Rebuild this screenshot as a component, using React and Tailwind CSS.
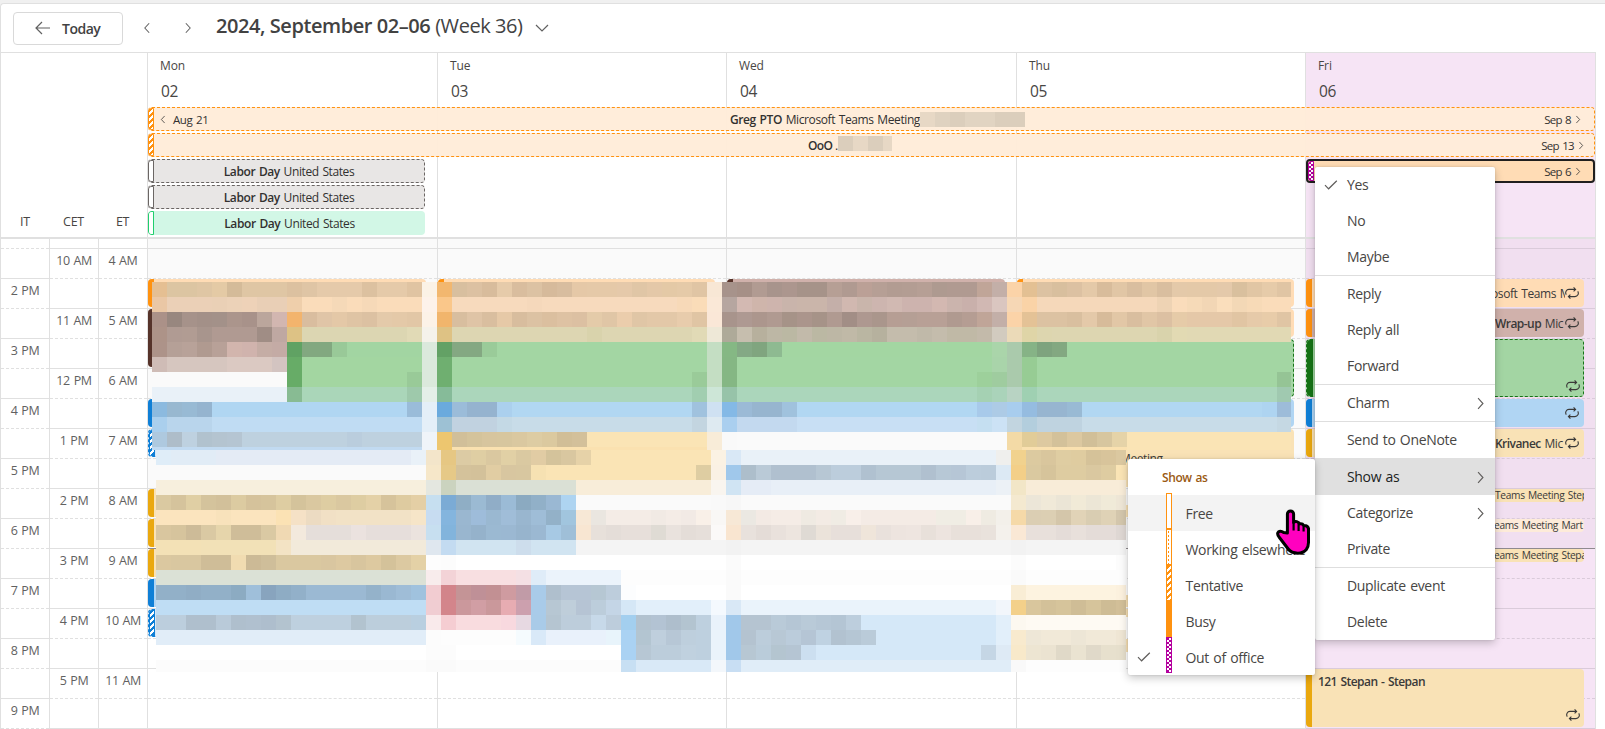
import React from "react";

/* ---------- pixelated regions: one string per 15px row, "colour*cells" ---------- */

const UPPER = [
  "e5bf92 dcc5a2*2 dfc6a4 e4caa5 d4bb99 dfc6a4*3 dcc1a0 dfc5a5 e5caaa*3 dcc1a0 e5caa9*2 e0c4a2 fbf2e6 f2b76f d8bf9f dcc1a2 d8bc9c e6cbaa d9bd9e dcc2a3 d6ba9b d8bd9f e5c8a7 e5c9a8*2 e5c9aa e0c6a6 e4c8a8 e4c9a6 e5caa8 e0c5a4 f8e7d5 a7938b a69087 b19b92 a8948c ac968e a69389*2 b69f95 b09a91 bba096 b69f95 b29c92 b39d93 b69f95 ae9a90 b09a91*2 c0a598 c3afa8 fbd3a8 e3c093 dcc2a2 d8bf9e dcc1a2 e4c9a8 d8bc9b e1c6a5 d9be9f e1c6a5 d9be9f e4c9a9 e4c9a8*2 e4c9aa d9c09e e1c6a4 e6cba9 e0c5a4",
  "eac7a5 ebd0b7*3 ead0b6 ecd2b8 eed2b8 e9cfb6*2 efcfab fadcba*2 f5d9b8 fadcba f6d9b8 fadcba*3 fdf2ea fac78a f7dabd*5 f5d8bb f7dabd*9 f7d9b8 fadcb8 fae8d7 b6a6a0 d3b9b2 cfb5ab ceb4ad c9b4ab cab5aa*2 c4afa9 d1b8b0 c9b5ab cdb5af d1b9b2 cdb3ae*2 d3b8b1 cbb4ad c9b0ab d1b8b3 dac6c0 f6d7b5 fad3a7 f5d8ba*8 eed3b4 fadcbb f6dab8 f2d6b5 fadebc f3d8b6 f7dab7 fadcba*2",
  "ab9188 98877f a6928a a39088 a39189 ab958c a8928a bba69c d2b6b0 f3b46d d9bd9f e0c5a7 e4c8a7 dfc4a4 dcc1a2 e4caaa e4c9a8 e2c7a6 fcf2e7 f1b56c d8be9f dfc4a6 d9be9f e6c9a7 d8bd9e dcc2a3 dbbf9f dec2a3 dcc0a2 e4cba9 e0c6a6 ebcdac e0c6a6 e3c8a8*2 e8ccac e0c5a4 fae7d7 a8948c ae9992 ac968d b09a91 a69388 ab958c a69388 b09a91 a28e86 ae9890 aa968c b69e94 b59f95 b8a096*2 b09a90 b59d93 c0a598 c3afa8 fbd3a8 e4c296 dcc2a2*2 d9bf9f e4c9a9 d7bb9a e2c7a6 d9be9f e1c6a6 dcc0a2 e6cba8 e5c8a8*3 e1c5a3 e6caa9 e8cca9 e0c5a4",
  "ad9388 b09b93 b19c93 a8958d b09a92*3 a08d85 bfa8a2 ddc285 dcd6b2*7 e1dab6 f5f2ea dec284 ddd6b2*9 d9d3ac ddd6b2*6 e1dab6 eee8d7 aeaa99 c6beae b7b09d bdb7a5 bbb8a3 c2baaa bbb8a3 bdb7a5 c0b9a7 bab6a2 b6b19e c4bcac*2 c0b9a9 c4bcac c0b9a6*2 c3baaa d2cbbf ebdab8 dfd5a7 ddd6af ddd6b1*7 d9d3ac e2dab3 e1d9b4*7",
  "ad9389 b5a097 b8a299 b09a90 b8a198 d2b5ad d0b3ad c5ada5 c4aba5 60a263 82a880*2 99c998 a2d5a2*5 dbe9dc 63a165 84a882*2 9acb99 a3d6a3*14 c4dec3 85b884 84a985 80a57f 8eba91 a3d6a2*14 aad5aa aacaac 86b386 7ea37e 83a881 a3d6a3*15",
  "cfbcb6 d6c6bf*4 dbc9c2*3 d3c4c1 67ac67 a3d6a1*8 dbe9dc 6faf70 a3d6a3*17 c4dec3 85b784 a3d6a3*17 a9d4aa aacaac 97cc94 a3d6a3*17",
  "fafafa*9 67ac67 a3d6a1*7 99ca98 dbe9dc 6faf70 a3d6a3*16 9acb99 c4dec3 85b784 a3d6a3*16 9dd09b 9fcc9f aacaac 97cc94 a3d6a3*16 95c495",
  "e9f1f8*9 88bb93 aad6b9*7 9ec9ab e4efe8 86bb99 abd6bb*16 a1ceb0 cde6d7 97c3a9 abd6bb*16 a5d1b3 aad3ba b8d3c3 9fd0b2 abd6bb*16 a0c9b0",
  "8cbadf 98b8d0 98bad4 95b4cf b0d6f2*13 9abcd9 e4eff8 6aaadd 9bbcd9 95b3cf*2 abd0ee b1d7f2*12 a0c2de cfe1f2 84b9e6 9bbad6 97b5cf*2 a0c2dd b1d7f2*12 a8caea adcbe6 a8cdee 95bce0 97b5d0*2 99bad4 b1d7f2*12 aed4f1 9dbcd9",
  "aacfed b9d5ec*3 c0dcf3*14 e4eff8 9dc1d4 c1d2e0*3 c4d9e5 c8dce8*12 c3d5e0 deeaf1 aacfef c3d9ef*4 c8dff4*12 c5dff1 cce2f5 c2d5e0 b3cedd bfd3e0*3 c8dce8*13 c5d8e3",
  "aec9df aebdc9 bed1e0 b1c2ce b4c4d0 b5c5d2 bed1df*7 bacddd bed1df*4 eff4f9 edc66f d1bf99 d4c39b d7c59e d7c69e dac8a0 ddcca3 dbc99f d1be97 d3c09a fae4b5*8 f8ecd8 f9f9f9 fafafa*18 f3daa6 e1cc98 ddc9a0 d3c19a dcc8a0 d1bf98 d7c69f e5d3a8 fae4b5*11",
  "c1daf1*18 eff4f9 edc66f fae1b0*17 f8ecd8 f9f9f9 fafafa*18 f3daa6 fae1b0*7 fae4b5*11",
];

const LOWER = [
  "dfedf8 e1ecf6*3 e4ebf5*13 e9f1f8 f3e5ca e6c783 dccba4 dfcea3 dac8a0 e1d0a5 dac9a1 e1cca4 d4c39b d9c7a0 e6d2a8 fae4b5*8 fbf2e3 d9e8f6 e9f1f8*17 efefed f1d28e dccaa0 d9c69d dfcda2 dfcca0 d5c299 d8c49b dbc8a0",
  "fafafa*18 f6e7c9 e6c987 d4c29b d3c19a e1cda3 d8c6a0 d8c7a0 f6e1b2 fae4b5*10 decda2 faf1e4 a0c8eb adbecb bacad7 b0c0cf*3 b7c7d4 bccddc*2 b0c1d0 b6c7d4*3 b0c0cf b7c8d6 b6c6d6 bccddc bbccdb dce9f4 f3cf88 dac9a0 d6c49b decca1*2 dac8a0 decca1 fae4b5",
  "f7efdd*18 e4e7e0 cbd3bf dae0d5*8 f8edd9*9 f9f5ef d0e4f3 e5ecf6*2 e8eff7*15 ecf1f6 f2e6c7 f8ecd8*7",
  "dac9a1 d5c39c e0cfa4 d4c39c d2c09a dccba1 d5c29b d6c49c decda2 d4c39b dac8a0 decda2 dac8a0 decda2 e4d1a7 d6c39b decba0 e4cfa5 c6dff0 7babd5 8faec5 9bbad3 90adc7 9bbbd6 8baac1 91b0c8 9ab8d3 aed4f1 fafafa*9 f9f9f9 f7f7f7 fafafa*18 f4e9d0 ece6d8 f0e9d8 ebe5d6 f1ead7 ece6d6 f0ead8 eee6d6",
  "fbe4be*4 f8e2bb fbe4be*3 fbe2b4 f5e1c6 ecdbc2 f1e0c5 f2e2c6*5 f6e5c8 c7dcf1 84b5de 9ab7d0 9ebcda 9ab8d1 a0bdd8 99b6cf 9fbdd7 93b1c8 a1c5de f7e8d6 eae6e0 f4ece6*3 f1eae4 f4ece6 f2eae5 f9f0e8 f9f7f5 f7e8d6 ebe8e2 f3eae4 f5ece6*2 efeae2 f3ebe4 f0ece4 f8efe9 f4ebe5*5 f0ede4*2 f8efe8 efebe2 f3f0ea f5d9a8 dbceb3 dccfb3 d4c6aa e1d3b7 d9cdb2 dfd2b6 d3c6ac",
  "d9c69f d6c49d cdbb98 dac9a3 e6d5ab cfbd99*2 dac9a3 f0d9b3 f3e9dd e5deda*3 ebe2df e6dedb*3 ebe3de c7dff0 82b4dc 99b6cf 95b2cb 9bb9d2 9bb8d2 97b4cd 9bb8d2 a7c9e4 9fbfd8 f8e6d2 e7e0da e4ddd8 e7dfda*2 dfdbd4 e9e2dd e4ddd8 e6dfda fbf9f8 f9e5d0 e8e1dc e4dcd7 e9e1dc ede5df dfdad4 ebe3da e7dfda*2 efe5da e9e1dc ede4df eee5e0 e8e0da ede4df e8e0da*2 e9e2dc f4f1ec fae8d5 e8e0db*2 e4dcd8 e8e0db e4dcd8*2 ded7d3",
  "f3e1b6*3 f2e1b7*5 f3e3c4 f2eada*9 dfe7ef c3dbf1 d1e4f1*4 cdddec d1e4f1*3 f4f4f4*9 f4f4f4 f2f2f2 f4f4f4*18 f2f2f2 f4f4f4*7",
  "dbc8a0 d9c7a0*2 cfbd98*2 f1dcb1 ccba96 cfbe9a dac8a0*3 d9c6a0 ddc9a1 d8c59e ddc9a0 d4c29a dcc9a1 e4d1a6 fdfdfd fcfcfc ffffff*17 ffffff fbfbfb ffffff*18 fcfcfc ffffff*6 fcfcfc",
  "dbe1d6*18 f8ecec f3d3d7 f8dfe1*4 f4e0e4 dfecf8 ebf3fb*5 fdfdfd*7 fafafa fdfdfd*18 fafafa fdfdfd*7",
  "92b0c8*2 90adc5 92b0c8*2 8cabc2 9fbfda 88a4be 8eacc4 92b0c9 9bb9d3*4 94b2ca 9ab8d2 9fbdd7 a0c2de f2ccd1 d2848a c49496 bf9097 c29093 cf9ba0 c19ba7 a9cbe9 afbfcd b6c5d5*2 b6c7d3 bdcddc fcfdfe ffffff*6 fafafa ffffff*18 f9edd5 fdf3e0*6 fcf1de",
  "bfddf4*18 f0cdd2 d3858b cb989c d19ea4 ca989b e7acb2 cca0ae a9cbe9 b7c7d3 bfceda b6c4d4 bccddb c4d5e6 d5e7f6 e2effa*5 f4f9fe d9e8f6 eaf3fb*17 f2f6fb f3d08a d9c69d d3c199 d6c49b cfbd96 d6c49b cebc95 d2bf98",
  "bccedd*2 afbfcd*2 b9cad9 afbfcd b0c0cf aebecd b3c3cf bed0df*4 b2c3cf bccedc*3 b9cfe0 f9eaeb f5cdd2 f9dcdf*3 f8d9df e7d9e2 a9cbe8 b5c5d1 bdcddb*2 c7d9e9 bdcddc a3cfef b2c2cf b3c3d3 aebecc b3c4d0 bed0df e9f2fb a1c8ea b5c4d1*2 b9cad8 b5c6d5 b9cad8 b6c7d6 b4c5d4 bdcedd d5e8f8*9 e2effa fcf8f0 fefaf3*7",
  "e1edf8*18 fcfcfc fdfdfd*5 f5fbfe d9e9f8 e9f1fb*4 e8f4fb aad2f3 b3c5d1 bfcfdd b7c7d6 becfdd bed0df eaf3fb a1c8ea b4c3d0 bccddb b8c8d5 bbccdb b5c5d5 bfd2e2 b2c2d0 b5c6d4 bacbd9 d5e8f8*8 e2effa f8eace eee7d7 f1e9d8*2 ede6d6 f1e9d8*2 efe6d4",
  "ffffff*18 fcfcfc fcfcfc ffffff*11 aad2f3 b7c7d4 bccddb*2 c0d1df bed0df eaf3fb a1c8ea b7c7d3 baccda b4c5d0 b5c5d3 ccdff0 d5e8f8*11 c5d6e5 deeaf5 f8e9ca ede5d2 ebe3d1 e0d9c8 eae3d1 e0d9c9 e7e0cd e6dfcc",
  "fcfcfc*18 fafafa fafafa fcfcfc*11 c7dff3 d9e9f7*5 f3f7fb c8def3 e0edf8*18 f9f9f9 fdfdfd*7",
];

const parseRow = (row) =>
  row.split(" ").map((run) => {
    const [color, n] = run.split("*");
    return { color: "#" + color, cells: Number(n || 1) };
  });

function Mosaic({ rows, className }) {
  return (
    <div className={"overflow-hidden " + className}>
      {rows.map((row, i) => (
        <div key={i} className="flex h-[15px]">
          {parseRow(row).map((run, j) => (
            <div
              key={j}
              className="h-full shrink-0"
              style={{ width: run.cells * 15, backgroundColor: run.color }}
            />
          ))}
        </div>
      ))}
    </div>
  );
}

/* ---------- icons ---------- */

function Chevron({ dir, className }) {
  const d = {
    left: "M8.5 1.5 2.5 8l6 6.5",
    right: "M2.5 1.5l6 6.5-6 6.5",
  }[dir];
  return (
    <svg viewBox="0 0 11 16" className={className} fill="none" stroke="currentColor" strokeWidth="1.4">
      <path d={d} />
    </svg>
  );
}

function Check() {
  return (
    <svg viewBox="0 0 14 10" className="h-[10px] w-[14px]" fill="none" stroke="#605e5c" strokeWidth="1.2">
      <path d="M1 5.2 4.6 8.8 12.8.8" />
    </svg>
  );
}

function Repeat() {
  return (
    <svg viewBox="0 0 14 12" className="h-3 w-3.5 shrink-0" fill="none" stroke="#3b3a39" strokeWidth="1.1">
      <path d="M8.6.4l2 2-2 2M10.4 2.4H4a3.3 3.3 0 0 0-2.7 5.2M5.4 7.6l-2 2 2 2M3.6 9.6H10a3.3 3.3 0 0 0 2.7-5.2" />
    </svg>
  );
}

function HandCursor() {
  return (
    <svg viewBox="0 0 34 46" className="absolute left-[1276px] top-[509px] z-30 h-[46px] w-[34px]">
      <path
        d="M11.4 24V5a3.1 3.1 0 0 1 6.2 0v8.4q1.2-1.2 3.2-.8 2.2.5 2.8 2.3 2.8-.6 4.2 1.6 3.8-.2 4.7 3v14q0 4-2.2 7-3 3.7-8.5 3.7-6.500 0-9.600-4.200L3.400 28.500Q.5 25 2.400 23q2.200-1.800 5.300.5z"
        fill="#ff00bf"
        stroke="#000"
        strokeWidth="3"
        strokeLinejoin="round"
      />
      <path d="M17.6 13v8.5M22.6 14v8M27.6 16v6.5" stroke="#000" strokeWidth="2.2" fill="none" />
    </svg>
  );
}

/* ---------- status stripes ---------- */

const STRIPE = {
  orange: "bg-[#ff9210]",
  brown: "bg-[#56332a]",
  green: "bg-[#167316]",
  blue: "bg-[#0f7fd6]",
  gold: "bg-[#eaa80f]",
  orangeHatch:
    "border border-[#ff9210] bg-[repeating-linear-gradient(135deg,#ff9210_0_2.2px,#fff_2.2px_4.3px)]",
  blueHatch:
    "border border-[#0f7fd6] bg-[repeating-linear-gradient(135deg,#0f7fd6_0_2.2px,#fff_2.2px_4.3px)]",
  grayFree: "border border-[#6b6664] bg-white",
  greenFree: "border border-[#1fce6d] bg-white",
  away: "border border-[#b4009e] bg-[#b4009e] bg-[conic-gradient(#fff_25%,transparent_0_50%,#fff_0_75%,transparent_0)] bg-[size:4px_4px]",
};

const BODY = {
  orange: "bg-[#ffdcb5]",
  brown: "bg-[#d0b1ab]",
  greenDashed: "bg-[#a3d5a3] border border-dashed border-[#167316]",
  blue: "bg-[#b0d5f3]",
  lightBlue: "bg-[#d5e8f8] border border-dashed border-[#0f7fd6]",
  gold: "bg-[#f9e2b6]",
  cream: "bg-[#fdebd9]",
};

function Event({ row, span = 1, stripe, body, children, className = "mr-[11px]" }) {
  return (
    <div
      className={"mb-0.5 flex min-w-0 overflow-hidden rounded-[4px] " + BODY[body] + " " + className}
      style={{ gridColumn: 1, gridRow: `${row} / span ${span}` }}
    >
      <div className={"w-1.5 shrink-0 " + STRIPE[stripe]} />
      {children}
    </div>
  );
}

/* ---------- calendar body ---------- */

const ROWS = Array.from({ length: 16 }, (_, i) => i);

function TimeColumn({ labels, solidFirst }) {
  const line = (solid) =>
    solid ? "border-b border-solid border-[#e0e0e0]" : "border-b border-dashed border-[#e0e0e0]";
  return (
    <div className="w-[49px] shrink-0 border-r border-[#e0e0e0]">
      <div className={"h-[10px] " + line(solidFirst)} />
      {ROWS.map((i) => {
        const labelled = i % 2 === (solidFirst ? 0 : 1);
        return (
          <div
            key={i}
            className={
              "flex h-[30px] items-start justify-center whitespace-nowrap pt-[3px] text-[12.5px] leading-[17px] tracking-[-0.4px] text-[#616161] [word-spacing:1px] " +
              line(!labelled)
            }
          >
            {labelled ? labels[Math.floor(i / 2)] : ""}
          </div>
        );
      })}
    </div>
  );
}

function DayColumn({ width, friday, children }) {
  return (
    <div className={"relative shrink-0 border-l border-[#e0e0e0] " + width}>
      <div className={"h-[10px] border-b " + (friday ? "border-[#dacbda] bg-[#f1dff0]" : "border-[#e0e0e0] bg-[#fafafa]")} />
      {ROWS.map((i) => {
        const bg = i < 10 ? (friday ? "bg-[#f1dff0]" : "bg-[#fafafa]") : friday ? "bg-[#f6e4f5]" : "bg-white";
        const color = i === 9 ? "border-[#8f8a8f]" : friday ? "border-[#dacbda]" : "border-[#e0e0e0]";
        return <div key={i} className={`h-[30px] border-b ${bg} ${color} ${i % 2 ? "border-solid" : "border-dashed"}`} />;
      })}
      <div className="absolute inset-x-0 top-[10px] grid auto-rows-[30px] grid-cols-1">{children}</div>
    </div>
  );
}

const EventText = ({ bold, children, small, className = "" }) => (
  <div
    className={
      "min-w-0 flex-1 overflow-hidden whitespace-pre text-[#3b3a39] [word-spacing:1px] " +
      (small ? "text-[10.2px] leading-[12px] tracking-[-0.32px] " : "text-[12px] leading-[17px] tracking-[-0.4px] ") +
      className
    }
  >
    {bold && <span className="font-semibold tracking-[-0.55px]">{bold}</span>}
    {children}
  </div>
);

const Recurring = ({ className = "items-center pr-[5px]" }) => (
  <div className={"flex shrink-0 " + className}>
    <Repeat />
  </div>
);

function FridayEvents() {
  return (
    <>
      <Event row={2} stripe="orange" body="orange">
        <EventText className="pl-[179px] pt-[6px]">osoft Teams M</EventText>
        <Recurring />
      </Event>
      <Event row={3} stripe="orange" body="brown">
        <EventText bold="Wrap-up" className="pl-[183px] pt-[6px]">{" "}Mic</EventText>
        <Recurring />
      </Event>
      <Event row={4} span={2} stripe="green" body="greenDashed">
        <div className="flex-1" />
        <Recurring className="items-end pb-[4px] pr-[3px]" />
      </Event>
      <Event row={6} stripe="blue" body="blue">
        <div className="flex-1" />
        <Recurring />
      </Event>
      <Event row={7} stripe="gold" body="gold">
        <EventText bold="Krivanec" className="pl-[183px] pt-[6px]">{" "}Mic</EventText>
        <Recurring />
      </Event>
      <Event row={9} stripe="gold" body="gold" className="mr-[11px] h-[13px]">
        <EventText small className="pl-[183px]">Teams Meeting Step</EventText>
      </Event>
      <Event row={10} stripe="orange" body="cream" className="mr-[11px] h-[13px]">
        <EventText small className="pl-[182px]">eams Meeting Mart</EventText>
      </Event>
      <Event row={11} stripe="gold" body="gold" className="mr-[11px] h-[13px]">
        <EventText small className="pl-[182px]">eams Meeting Stepa</EventText>
      </Event>
      <Event row={15} span={2} stripe="gold" body="gold">
        <EventText bold="121 Stepan - Stepan" className="pl-[6px] pt-[4px]" />
        <Recurring className="items-end pb-[6px] pr-[4px]" />
      </Event>
    </>
  );
}

function AllDay({ stripe, body, className = "leading-[23px]", children }) {
  return (
    <div
      className={
        "flex h-6 overflow-hidden rounded-[4px] text-[12px] tracking-[-0.4px] text-[#323130] [word-spacing:1px] " +
        body +
        " " +
        className
      }
    >
      <div className={"w-1.5 shrink-0 rounded-l-[3px] " + stripe} />
      {children}
    </div>
  );
}

function Swatches({ colors }) {
  return (
    <div className="flex h-[15px] w-full overflow-hidden">
      {colors.map((c, i) => (
        <div key={i} className="h-full w-[15px] shrink-0" style={{ backgroundColor: c }} />
      ))}
    </div>
  );
}

/* ---------- menus ---------- */

function MenuItem({ label, checked, submenu, active }) {
  return (
    <div
      className={
        "flex items-center text-[14px] tracking-[-0.32px] [word-spacing:1px] " +
        (active ? "h-[37px] bg-[#e0e0e0] pt-px text-[#201f1e]" : "h-[36px] text-[#484644]")
      }
    >
      <div className="flex w-8 shrink-0 justify-end pr-[9px]">{checked && <Check />}</div>
      <div className="flex-1 whitespace-nowrap pb-px">{label}</div>
      {submenu && <Chevron dir="right" className="mr-[10px] h-[13px] w-[9px] text-[#605e5c]" />}
    </div>
  );
}

const Divider = () => <div className="h-px bg-[#dedede]" />;

function StatusItem({ label, swatch, checked, hover }) {
  return (
    <div
      className={
        "flex h-9 items-center text-[14px] tracking-[-0.32px] text-[#484644] [word-spacing:1px] " +
        (hover ? "bg-[#f3f3f3]" : "")
      }
    >
      <div className="flex w-[38px] shrink-0 pl-[9px]">{checked && <Check />}</div>
      <div className={"-mt-1 h-9 w-1.5 shrink-0 " + swatch} />
      <div className="ml-[13.5px] whitespace-nowrap">{label}</div>
    </div>
  );
}

const DAYS = [
  ["Mon", "02", "w-[290px]"],
  ["Tue", "03", "w-[289px]"],
  ["Wed", "04", "w-[290px]"],
  ["Thu", "05", "w-[289px]"],
  ["Fri", "06", "w-[290px]"],
];

export default function App() {
  return (
    <div className="relative h-[729px] w-[1605px] overflow-hidden bg-[#f0f0f0] pt-[3px] font-['Open_Sans','Noto_Sans',sans-serif]">
      <div className="flex h-[726px] flex-col rounded-tl-[4px] border-l border-t border-[#e0e0e0] bg-white">
        {/* toolbar */}
        <div className="flex h-12 shrink-0 items-center pl-3 text-[#424242]">
          <div className="flex h-[33px] w-[110px] items-center rounded-[4px] border border-[#d9d9d9] pl-[21px]">
            <svg viewBox="0 0 16 14" className="h-[14px] w-4" fill="none" stroke="#616161" strokeWidth="1.2">
              <path d="M7 1 1 7l6 6M1 7h14" />
            </svg>
            <span className="ml-[11px] text-[14px] font-semibold tracking-[-0.5px]">Today</span>
          </div>
          <Chevron dir="left" className="ml-5 h-3 w-2 text-[#616161]" />
          <Chevron dir="right" className="ml-[33px] h-3 w-2 text-[#616161]" />
          <div className="ml-[24px] w-[308px] whitespace-pre pb-[5px] text-[20px] leading-[27px] tracking-[-0.43px]">
            <span className="font-semibold">2024, September 02–06</span> (Week 36)
          </div>
          <svg viewBox="0 0 14 8" className="ml-[11px] h-2 w-3.5" fill="none" stroke="#616161" strokeWidth="1.2">
            <path d="M1 1l6 6 6-6" />
          </svg>
        </div>

        {/* day headers and all-day events */}
        <div className="relative flex h-[187px] w-[1595px] shrink-0 border-b-2 border-t border-[#e0e0e0]">
          <div className="flex w-[146px] shrink-0 items-end pb-[7px] text-center text-[12.5px] leading-[17px] text-[#484644]">
            <div className="w-12 tracking-[-0.3px]">IT</div>
            <div className="w-[49px] tracking-[-0.3px]">CET</div>
            <div className="w-[49px] tracking-[-0.3px]">ET</div>
          </div>
          {DAYS.map(([name, num, width]) => (
            <div
              key={name}
              className={
                "shrink-0 border-l border-[#e0e0e0] pl-3 pt-1 text-[#484644] " +
                width +
                (name === "Fri" ? " bg-[#f6e4f5]" : "")
              }
            >
              <div className="text-[12px] leading-[17px] tracking-[-0.1px]">{name}</div>
              <div className="mt-[7px] pl-px text-[15.5px] leading-5 tracking-[-0.4px]">{num}</div>
            </div>
          ))}
          <div className="w-px bg-[#e0e0e0]" />
          <div className="absolute left-[147px] top-[54px] grid w-[1447px] gap-0.5">
            <AllDay stripe={STRIPE.orangeHatch} body="border border-l-0 border-dashed border-[#ff9210] bg-[#ffecd8]/95">
              <div className="relative flex flex-1 items-center">
                <Chevron dir="left" className="ml-[6px] h-[9px] w-[6px]" />
                <span className="ml-[7px] text-[11.5px]">Aug 21</span>
                <div className="ml-auto flex items-center">
                  <span className="text-[11.5px] tracking-[-0.7px]">Sep 8</span>
                  <Chevron dir="right" className="ml-[4px] mr-[13px] h-[9px] w-[6px]" />
                </div>
                <div className="absolute left-[576px] flex items-center whitespace-pre">
                  <div className="w-[190px]">
                    <span className="font-semibold">Greg PTO</span> Microsoft Teams Meeting
                  </div>
                  <div className="w-[105px]">
                    <Swatches colors={["#e7d8c5", "#dfd2c0", "#dbcebc", "#e1d4c2", "#e1d4c2", "#dbcebc", "#dbcebc"]} />
                  </div>
                </div>
              </div>
            </AllDay>
            <AllDay stripe={STRIPE.orangeHatch} body="border border-l-0 border-dashed border-[#ff9210] bg-[#ffecd8]/95">
              <div className="relative flex flex-1 items-center justify-end">
                <span className="text-[11.5px] tracking-[-0.7px]">Sep 13</span>
                <Chevron dir="right" className="ml-[4px] mr-[10px] h-[9px] w-[6px]" />
                <div className="absolute left-[654px] flex items-center whitespace-pre">
                  <div className="w-[30px] tracking-[-0.6px] [word-spacing:0px]">
                    <span className="font-semibold">OoO</span> .
                  </div>
                  <div className="-mt-1 w-[54px]">
                    <Swatches colors={["#dbcebc", "#e7d8c5", "#dbcebc", "#e7d8c5"]} />
                  </div>
                </div>
              </div>
            </AllDay>
            <div className="flex justify-between">
              <div className="grid w-[277px] gap-0.5">
                {[0, 1].map((i) => (
                  <AllDay key={i} stripe={STRIPE.grayFree} body="border border-l-0 border-dashed border-[#6b6664] bg-[#e8e6e5]">
                    <div className="flex-1 text-center">
                      <span className="font-semibold">Labor Day</span> United States
                    </div>
                  </AllDay>
                ))}
                <AllDay stripe={STRIPE.greenFree} body="bg-[#d2f7e6]" className="leading-[25px]">
                  <div className="flex-1 text-center">
                    <span className="font-semibold">Labor Day</span> United States
                  </div>
                </AllDay>
              </div>
              <AllDay stripe={STRIPE.away} body="border-2 border-[#201f1e] bg-[#ffdcb5]" className="w-[289px] leading-[20px]">
                <div className="flex flex-1 items-center justify-end">
                  <span className="pt-px text-[11.5px] tracking-[-0.7px]">Sep 6</span>
                  <Chevron dir="right" className="ml-[4px] mr-[12px] h-[9px] w-[6px]" />
                </div>
              </AllDay>
            </div>
          </div>
        </div>

        {/* time grid */}
        <div className="relative flex h-[490px] w-[1595px] shrink-0">
          <TimeColumn labels={["2 PM", "3 PM", "4 PM", "5 PM", "6 PM", "7 PM", "8 PM", "9 PM"]} />
          <TimeColumn solidFirst labels={["10 AM", "11 AM", "12 PM", "1 PM", "2 PM", "3 PM", "4 PM", "5 PM"]} />
          <div className="w-[48px] shrink-0 overflow-hidden">
            <TimeColumn solidFirst labels={["4 AM", "5 AM", "6 AM", "7 AM", "8 AM", "9 AM", "10 AM", "11 AM"]} />
          </div>
          <DayColumn width="w-[290px]">
            <Event row={2} stripe="orange" body="orange" />
            <Event row={3} span={2} stripe="brown" body="brown" className="mr-[150px]" />
            <Event row={6} stripe="blue" body="blue" />
            <Event row={7} stripe="blueHatch" body="lightBlue" />
            <Event row={9} stripe="gold" body="gold" />
            <Event row={10} stripe="gold" body="gold" />
            <Event row={11} stripe="gold" body="gold" />
            <Event row={12} stripe="blue" body="blue" />
            <Event row={13} stripe="blueHatch" body="lightBlue" />
          </DayColumn>
          <DayColumn width="w-[289px]">
            <Event row={2} stripe="orange" body="orange" />
          </DayColumn>
          <DayColumn width="w-[290px]">
            <Event row={2} stripe="brown" body="brown" />
          </DayColumn>
          <DayColumn width="w-[289px]">
            <Event row={2} stripe="orange" body="orange" />
            <Event row={3} stripe="orange" body="orange" />
            <Event row={4} span={2} stripe="green" body="greenDashed" />
            <Event row={6} stripe="blue" body="blue" />
            <Event row={7} span={2} stripe="gold" body="gold">
              <EventText className="pl-[97px] pt-[21px]">Meeting</EventText>
            </Event>
            <Event row={9} stripe="gold" body="gold" className="mr-[11px] mt-[16px]" />
            <Event row={12} stripe="gold" body="gold" className="mr-[11px] mt-[16px]" />
            <Event row={13} stripe="gold" body="gold" className="mr-[11px] h-2" />
            <Event row={14} stripe="gold" body="gold" className="mr-[11px] h-[13px]" />
          </DayColumn>
          <DayColumn width="w-[290px]" friday>
            <FridayEvents />
          </DayColumn>
          <div className="w-px shrink-0 bg-[#e0e0e0]" />
          <Mosaic rows={UPPER} className="absolute left-[151px] top-[43px] h-[168px] w-[1139px]" />
          <Mosaic rows={LOWER} className="absolute left-[155px] top-[211px] h-[222px] w-[970px]" />
        </div>
      </div>

      {/* context menu */}
      <div className="absolute left-[1315px] top-[167px] z-10 w-[180px] rounded-[2px] bg-white shadow-[0_3px_8px_rgba(0,0,0,0.22),0_0_2px_rgba(0,0,0,0.15)]">
        <MenuItem label="Yes" checked />
        <MenuItem label="No" />
        <MenuItem label="Maybe" />
        <Divider />
        <MenuItem label="Reply" />
        <MenuItem label="Reply all" />
        <MenuItem label="Forward" />
        <Divider />
        <MenuItem label="Charm" submenu />
        <Divider />
        <MenuItem label="Send to OneNote" />
        <MenuItem label="Show as" submenu active />
        <MenuItem label="Categorize" submenu />
        <MenuItem label="Private" />
        <Divider />
        <MenuItem label="Duplicate event" />
        <MenuItem label="Delete" />
      </div>

      {/* status submenu */}
      <div className="absolute left-[1128px] top-[459px] z-20 w-[187px] rounded-[2px] bg-white shadow-[0_3px_8px_rgba(0,0,0,0.22),0_0_2px_rgba(0,0,0,0.15)]">
        <div className="flex h-9 items-center pl-[34px] pt-0.5 text-[12px] font-semibold tracking-[-0.4px] text-[#9a5a13] [word-spacing:1px]">
          Show as
        </div>
        <StatusItem label="Free" hover swatch="border border-[#ff9210] bg-white" />
        <StatusItem
          label="Working elsewhere"
          swatch="border border-[#ff9210] bg-white bg-[radial-gradient(#ff9210_0.6px,transparent_0.8px)] bg-[size:3px_4px]"
        />
        <StatusItem label="Tentative" swatch={STRIPE.orangeHatch} />
        <StatusItem label="Busy" swatch="bg-[#ff9210]" />
        <StatusItem label="Out of office" checked swatch={STRIPE.away} />
      </div>

      <HandCursor />
    </div>
  );
}
